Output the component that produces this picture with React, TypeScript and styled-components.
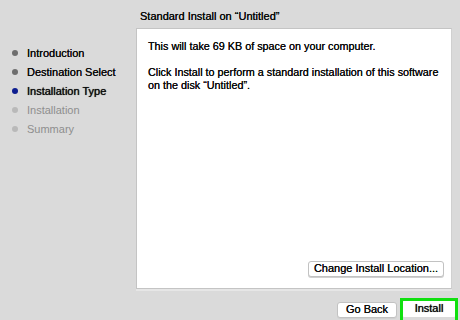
import React from "react";
import styled, { createGlobalStyle } from "styled-components";

const Global = createGlobalStyle`
  html, body { margin: 0; padding: 0; background: #dadada; }
  body { font-family: "Liberation Sans", Arial, sans-serif; }
`;

const Window = styled.div`
  width: 460px;
  height: 320px;
  background: #dadada;
  display: grid;
  grid-template-columns: 136px 1fr;
  overflow: hidden;
  color: #111;
`;

const Sidebar = styled.ul`
  list-style: none;
  margin: 0;
  padding: 43px 0 0 12px;
  display: flex;
  flex-direction: column;
`;

const Step = styled.li<{ $state: "done" | "current" | "todo" }>`
  height: 19px;
  display: flex;
  align-items: center;
  gap: 9px;
  font-size: 11px;
  color: ${(p) => (p.$state === "todo" ? "#8e8e8e" : "#0c0c0c")};
  text-shadow: ${(p) =>
    p.$state === "todo" ? "none" : p.$state === "current" ? "0 0 0.7px #000" : "0 0 0.4px #000"};
  &::before {
    content: "";
    width: 6px;
    height: 6px;
    border-radius: 50%;
    flex: none;
    background: ${(p) =>
      p.$state === "current" ? "#0d1d8f" : p.$state === "done" ? "#6e6e6e" : "#b9b9b9"};
  }
`;

const Main = styled.div`
  display: flex;
  flex-direction: column;
`;

const Heading = styled.div`
  height: 28px;
  box-sizing: border-box;
  padding: 0 0 6px 4px;
  display: flex;
  align-items: flex-end;
  font-size: 11px;
  color: #0c0c0c;
  text-shadow: 0 0 0.4px #000;
`;

const Panel = styled.div`
  width: 316px;
  height: 261px;
  box-sizing: border-box;
  background: #fff;
  border: 1px solid #c4c4c4;
  border-right-color: #d0d0d0;
  box-shadow: 0 2px 0 #e6e6e6;
  padding: 11px 7px 11px 11px;
  display: flex;
  flex-direction: column;
`;

const Para = styled.p`
  margin: 0 0 13px;
  font-size: 10.8px;
  line-height: 13px;
  color: #0c0c0c;
  text-shadow: 0 0 0.4px #000;
`;

const Spacer = styled.div`
  flex: 1;
`;

const Button = styled.button`
  font-family: "Liberation Sans", Arial, sans-serif;
  font-size: 11px;
  color: #0c0c0c;
  text-shadow: 0 0 0.4px #000;
  background: #fff;
  border: 1px solid #c2c2c2;
  border-radius: 3px;
  box-shadow: 0 1px 0 #d0d0d0;
  height: 16px;
  padding: 0 0 1px;
  line-height: 13px;
  white-space: nowrap;
  cursor: default;
`;

const PanelButton = styled(Button)`
  align-self: flex-end;
  width: 136px;
`;

const Footer = styled.div`
  flex: 1;
  display: flex;
  justify-content: flex-end;
  align-items: flex-end;
  gap: 3px;
  padding-right: 2px;
`;

const BackButton = styled(Button)`
  width: 60px;
  margin-bottom: 2px;
`;

const Highlight = styled.div`
  width: 58px;
  height: 22px;
  box-sizing: border-box;
  border: 3px solid #10e010;
  border-bottom: none;
  display: flex;
  align-items: flex-start;
`;

const InstallButton = styled(Button)`
  flex: 1;
  height: 16px;
  border: none;
  border-radius: 1px;
  box-shadow: none;
  text-shadow: 0 0 0.7px #000;
`;

export default function App() {
  return (
    <>
      <Global />
      <Window>
        <Sidebar>
          <Step $state="done">Introduction</Step>
          <Step $state="done">Destination Select</Step>
          <Step $state="current">Installation Type</Step>
          <Step $state="todo">Installation</Step>
          <Step $state="todo">Summary</Step>
        </Sidebar>
        <Main>
          <Heading>Standard Install on “Untitled”</Heading>
          <Panel>
            <Para>This will take 69 KB of space on your computer.</Para>
            <Para>
              Click Install to perform a standard installation of this software
              <br />
              on the disk “Untitled”.
            </Para>
            <Spacer />
            <PanelButton>Change Install Location...</PanelButton>
          </Panel>
          <Footer>
            <BackButton>Go Back</BackButton>
            <Highlight>
              <InstallButton>Install</InstallButton>
            </Highlight>
          </Footer>
        </Main>
      </Window>
    </>
  );
}
